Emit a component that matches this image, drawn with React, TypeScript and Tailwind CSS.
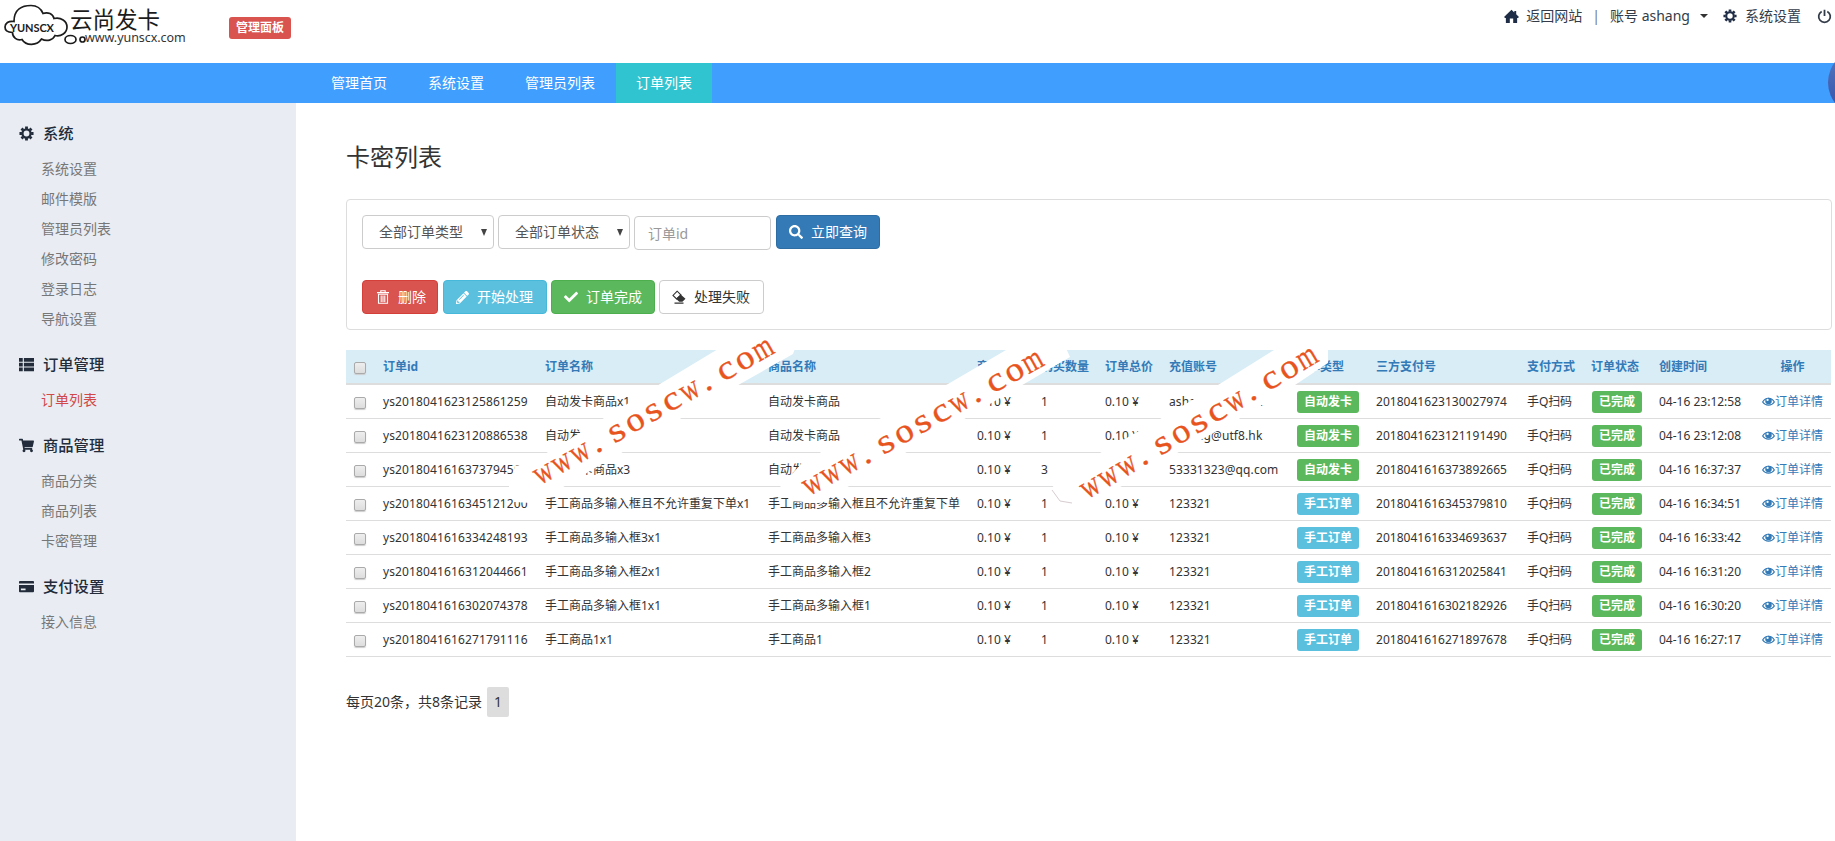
import { ReactNode } from 'react';
import { FaCheck, FaPencilAlt, FaSearch, FaShoppingCart } from 'react-icons/fa';

type IconProps = { className?: string };

const HomeIcon = ({ className }: IconProps) => (
  <svg className={className} viewBox="0 0 16 16" fill="currentColor">
    <path d="M8 0.8l3 2.8V2h2v3.500l3 3-1.200 1H14V15h-4.200v-4.800H6.200V15H2V9.500H1.200L0 8.500z" />
  </svg>
);

const GearIcon = ({ className }: IconProps) => (
  <svg className={className} viewBox="0 0 16 16" fill="none" stroke="currentColor">
    <circle cx="8" cy="8" r="4.3" strokeWidth="2.4" />
    <path
      strokeWidth="3"
      d="M8 0.5v2.600M8 12.900v2.600M0.500 8h2.600M12.900 8h2.600M2.700 2.700l1.800 1.800M11.500 11.500l1.800 1.800M2.700 13.300l1.800-1.800M11.500 4.500l1.800-1.800"
    />
  </svg>
);

const PowerIcon = ({ className }: IconProps) => (
  <svg className={className} viewBox="0 0 16 16" fill="none" stroke="currentColor" strokeWidth="1.9">
    <path d="M5 2.6a6.2 6.2 0 1 0 6 0M8 0.8v6.7" />
  </svg>
);

const ListIcon = ({ className }: IconProps) => (
  <svg className={className} viewBox="0 0 16 16" fill="currentColor">
    <path d="M0 1h4v4H0zM5.2 1H16v4H5.2zM0 6.1h4v4H0zM5.2 6.1H16v4H5.2zM0 11.2h4v4H0zM5.2 11.2H16v4H5.2z" />
  </svg>
);

const CardIcon = ({ className }: IconProps) => (
  <svg className={className} viewBox="0 0 16 16" fill="currentColor" fillRule="evenodd">
    <path d="M1 2h14a1 1 0 0 1 1 1v1.8H0V3a1 1 0 0 1 1-1zM0 6.5h16V13a1 1 0 0 1-1 1H1a1 1 0 0 1-1-1zM2 10v2h5v-2z" />
  </svg>
);

const TrashIcon = ({ className }: IconProps) => (
  <svg className={className} viewBox="0 0 14 14" fill="none" stroke="currentColor" strokeWidth="1.1">
    <path d="M1 2.6h12M4.8 2.4V0.8h4.400v1.600M2.500 4.300v9h9v-9zM5.200 5.500v6.500M7 5.500v6.500M8.800 5.500v6.500" />
  </svg>
);

const EraserIcon = ({ className }: IconProps) => (
  <svg className={className} viewBox="0 0 14 14">
    <path d="M5.200 1.200L1 5.400l3.600 3.600 4.400-4z" fill="none" stroke="currentColor" strokeWidth="1.1" />
    <path d="M8.600 4.400l4.900 4.300-3.100 3H7.200L4 8.800zM2.500 12.500h9v1.200h-9z" fill="currentColor" />
  </svg>
);

const EyeIcon = ({ className }: IconProps) => (
  <svg className={className} viewBox="0 0 14 12">
    <path d="M0.7 6C3.7 0.8 10.3 0.8 13.3 6 10.3 10.6 3.7 10.6 0.7 6z" fill="none" stroke="currentColor" strokeWidth="1.3" />
    <circle cx="7" cy="5" r="3.5" fill="currentColor" />
    <circle cx="6" cy="3.8" r="1.2" fill="#fff" />
  </svg>
);

const Logo = () => (
  <div className="flex w-[190px] pl-[4px]">
    <svg className="h-[48px] w-[83px] shrink-0" viewBox="4 0 83 48" fill="none" stroke="#1c1c1c" strokeWidth="1.7">
      <path d="M14 21.5C14 9 22 5.5 31 5.5 37 5.5 41 8.5 43 13.5 48 11.5 53 14 54 18.5 61 17 67 21 67 27 67 33 61 37 55 35.5 53 40 47 42 41.5 39 37 46 26 46 22 39.5 17 41 12.500 37.5 12.5 32.500 7 32.5 5 30 5 27 5 23.5 8.500 20.5 14 21.5z" />
      <ellipse cx="70.5" cy="39.5" rx="5.5" ry="4" />
      <circle cx="82.5" cy="39.5" r="2.5" />
      <text x="10" y="31.500" textLength="44" fontSize="11" fill="#1c1c1c" stroke="none" className="font-['Lato',sans-serif] font-bold">
        YUNSCX
      </text>
    </svg>
    <div className="-ml-[17px] pt-[7px] text-[#1c1c1c]">
      <div className="h-[24px] text-[22.5px] leading-[26px] whitespace-nowrap">云尚发卡</div>
      <div className="pl-[15px] text-[12.5px] leading-[14px] tracking-[-0.050px] text-[#333]">www.yunscx.com</div>
    </div>
  </div>
);

const menu: { title: string; icon: ReactNode; items: string[] }[] = [
  {
    title: '系统',
    icon: <GearIcon className="size-[15px]" />,
    items: ['系统设置', '邮件模版', '管理员列表', '修改密码', '登录日志', '导航设置'],
  },
  { title: '订单管理', icon: <ListIcon className="size-[15px]" />, items: ['订单列表'] },
  { title: '商品管理', icon: <FaShoppingCart className="size-[15px]" />, items: ['商品分类', '商品列表', '卡密管理'] },
  { title: '支付设置', icon: <CardIcon className="size-[15px]" />, items: ['接入信息'] },
];

const navItems = ['管理首页', '系统设置', '管理员列表', '订单列表'];

const columns = [
  { label: '订单id', width: 'w-[162px]' },
  { label: '订单名称', width: 'w-[223px]' },
  { label: '商品名称', width: 'w-[209px]' },
  { label: '商品单价', width: 'w-[64px]' },
  { label: '购买数量', width: 'w-[64px]' },
  { label: '订单总价', width: 'w-[64px]' },
  { label: '充值账号', width: 'w-[127px]' },
  { label: '订单类型', width: 'w-[80px]' },
  { label: '三方支付号', width: 'w-[151px]' },
  { label: '支付方式', width: 'w-[64px]' },
  { label: '订单状态', width: 'w-[68px]' },
  { label: '创建时间', width: 'w-[102px]' },
];

// id, order name, product, quantity, account, auto delivery, payment no., created
const orders: [string, string, string, number, string, boolean, string, string][] = [
  ['ys2018041623125861259', '自动发卡商品x1', '自动发卡商品', 1, 'ashang@utf8.hk', true, '2018041623130027974', '04-16 23:12:58'],
  ['ys2018041623120886538', '自动发卡商品x1', '自动发卡商品', 1, 'ashang@utf8.hk', true, '2018041623121191490', '04-16 23:12:08'],
  ['ys2018041616373794560', '自动发卡商品x3', '自动发卡商品', 3, '53331323@qq.com', true, '2018041616373892665', '04-16 16:37:37'],
  ['ys2018041616345121200', '手工商品多输入框且不允许重复下单x1', '手工商品多输入框且不允许重复下单', 1, '123321', false, '2018041616345379810', '04-16 16:34:51'],
  ['ys2018041616334248193', '手工商品多输入框3x1', '手工商品多输入框3', 1, '123321', false, '2018041616334693637', '04-16 16:33:42'],
  ['ys2018041616312044661', '手工商品多输入框2x1', '手工商品多输入框2', 1, '123321', false, '2018041616312025841', '04-16 16:31:20'],
  ['ys2018041616302074378', '手工商品多输入框1x1', '手工商品多输入框1', 1, '123321', false, '2018041616302182926', '04-16 16:30:20'],
  ['ys2018041616271791116', '手工商品1x1', '手工商品1', 1, '123321', false, '2018041616271897678', '04-16 16:27:17'],
];

const Checkbox = () => (
  <span
    role="checkbox"
    aria-checked="false"
    className="mt-[3px] ml-px block size-[12px] rounded-[2px] border border-[#aaa] bg-gradient-to-b from-[#eee] to-[#ddd] shadow-[0_1px_1px_#ccc]"
  />
);

const Label = ({ color, children }: { color: string; children: ReactNode }) => (
  <span className={`ml-px block h-[22px] w-fit rounded-[3px] px-[7px] text-[12px] leading-[22px] font-bold tracking-normal text-white ${color}`}>
    {children}
  </span>
);

const Select = ({ children }: { children: ReactNode }) => (
  <div className="flex h-[34px] w-[132px] items-center justify-between rounded border border-[#ccc] pr-[6px] pl-[16px] text-[#555]">
    {children}
    <svg className="h-[7px] w-[6px]" viewBox="0 0 6 7">
      <path d="M0 0h6L3 7z" fill="#444" />
    </svg>
  </div>
);

// Each mark is a white strip with thirteen evenly spaced letters set along a slope.
const marks = [
  {
    strip: '508,490 515,466 530,463 660,384 733,340 798,340 793,354 740,384 585,474 548,496 531,503 514,502',
    transform: 'translate(544 474) rotate(-29.4)',
  },
  {
    strip: '780,487 802,463 888,414 948,384 1018,343 1061,337 1070,357 1024,384 966,418 905,453 849,486 822,503 790,501',
    transform: 'translate(813 485) rotate(-29.1)',
  },
  {
    strip: '1052,488 1062,474 1100,453 1160,419 1218,385 1282,345 1328,338 1328,363 1295,385 1237,420 1177,453 1122,486 1090,503 1060,502',
    transform: 'translate(1091 488) rotate(-30.8)',
  },
];

const glyphScale: Record<string, number> = { w: 0.76, m: 0.74, s: 1.2, c: 1.15, o: 1.08, '.': 1.1 };

const Watermarks = () => (
  <svg className="pointer-events-none absolute top-0 left-0" width="1835" height="841" viewBox="0 0 1835 841">
    {marks.map((mark) => (
      <g key={mark.strip}>
        <polygon points={mark.strip} fill="#fff" />
        <g transform={mark.transform} fill="#e8541e" fontSize="34" textAnchor="middle" className="font-['Liberation_Serif',serif]">
          {'www.soscw.com'.split('').map((char, i) => (
            <text
              key={i}
              transform={`translate(${i * 21 - (char === '.' ? 3 : 0)} 8) scale(${glyphScale[char]} 1)`}
              stroke="#e8541e"
              strokeWidth="0.3"
            >
              {char}
            </text>
          ))}
        </g>
      </g>
    ))}
    <path d="M1052 490l8 11 12 2" fill="none" stroke="#d8ccd2" strokeWidth="1" />
  </svg>
);

export default function App() {
  return (
    <div className="relative flex h-[841px] w-[1835px] flex-col overflow-hidden bg-white font-['Noto_Sans','Noto_Sans_CJK_SC',sans-serif] text-[14px] leading-[20px] text-[#333]">
      <header className="flex h-[63px] shrink-0 justify-between">
        <div className="flex">
          <Logo />
          <span className="mt-[17px] ml-[39px] h-[22px] rounded-[3px] bg-[#d9534f] px-[7px] text-[12px] leading-[21px] font-bold text-white">
            管理面板
          </span>
        </div>
        <div className="flex h-[32px] items-center pr-[3px] text-[#333c48]">
          <HomeIcon className="mr-[7px] size-[15px] text-[#1f2d46]" />
          返回网站
          <span className="mx-[10px] text-[#777]">|</span>
          <span className="w-[81px] whitespace-nowrap">账号 ashang</span>
          <span className="mr-[15px] ml-[9px] border-x-4 border-t-4 border-x-transparent border-t-[#333]" />
          <GearIcon className="mr-[8px] size-[14px] text-[#1f2d46]" />
          系统设置
          <PowerIcon className="ml-[16px] size-[15px]" />
        </div>
      </header>

      <nav className="flex h-[40px] shrink-0 gap-px bg-[#409eff] pl-[311px] text-white">
        {navItems.map((item) => (
          <a key={item} className={`px-[20px] leading-[39px] ${item === '订单列表' ? 'bg-[#30c4d0]' : ''}`}>
            {item}
          </a>
        ))}
      </nav>
      <div className="absolute top-[49px] left-[1828px] size-[67px] rounded-full bg-gradient-to-b from-[#5878c0] to-[#3450a8]" />

      <div className="flex grow">
        <aside className="w-[296px] shrink-0 bg-[#e9ecf3] pt-[9px]">
          {menu.map((section) => (
            <section key={section.title} className="mb-[9px]">
              <h3 className="flex h-[42px] items-center gap-[9px] pl-[19px] text-[15.300px] font-medium text-[#222c3a]">
                {section.icon}
                {section.title}
              </h3>
              {section.items.map((item) => (
                <a key={item} className={`block pl-[41px] leading-[30px] ${item === '订单列表' ? 'text-[#d04848]' : 'text-[#777]'}`}>
                  {item}
                </a>
              ))}
            </section>
          ))}
        </aside>

        <main className="w-[1536px] pl-[50px]">
          <h1 className="mt-[37px] text-[24px] leading-[34px]">卡密列表</h1>

          <div className="mt-[25px] h-[131px] rounded border border-[#ddd] px-[15px] pt-[15px]">
            <div className="flex gap-[4px]">
              <Select>全部订单类型</Select>
              <Select>全部订单状态</Select>
              <input
                placeholder="订单id"
                className="mt-px mr-px h-[34px] w-[137px] rounded border border-[#ccc] px-[13px] placeholder:text-[#999]"
              />
              <button className="flex h-[34px] w-[104px] items-center gap-[8px] rounded border border-[#2e6da4] bg-[#337ab7] pl-[12px] text-white">
                <FaSearch className="size-[14px]" />
                立即查询
              </button>
            </div>
            <div className="mt-[30px] flex gap-[4px]">
              <button className="mr-px flex h-[34px] w-[76px] items-center gap-[8px] rounded border border-[#d43f3a] bg-[#d9534f] pl-[13px] text-white">
                <TrashIcon className="size-[14px]" />
                删除
              </button>
              <button className="flex h-[34px] w-[104px] items-center gap-[8px] rounded border border-[#46b8da] bg-[#5bc0de] pl-[12px] text-white">
                <FaPencilAlt className="size-[13px]" />
                开始处理
              </button>
              <button className="flex h-[34px] w-[104px] items-center gap-[8px] rounded border border-[#4cae4c] bg-[#5cb85c] pl-[12px] text-white">
                <FaCheck className="size-[14px]" />
                订单完成
              </button>
              <button className="flex h-[34px] w-[105px] items-center gap-[8px] rounded border border-[#ccc] bg-white pl-[12px]">
                <EraserIcon className="size-[14px]" />
                处理失败
              </button>
            </div>
          </div>

          <table className="mt-[20px] w-[1485px] table-fixed border-separate border-spacing-0 text-[12px] whitespace-nowrap">
            <thead>
              <tr className="h-[35px] bg-[#d9edf7] text-left text-[#337ab7]">
                <th className="w-[30px] border-b-2 border-[#ddd] pl-[7px]">
                  <Checkbox />
                </th>
                {columns.map((column) => (
                  <th key={column.label} className={`border-b-2 border-[#ddd] pl-[7px] font-bold ${column.width}`}>
                    {column.label}
                  </th>
                ))}
                <th className="w-[77px] border-b-2 border-[#ddd] text-center font-bold">操作</th>
              </tr>
            </thead>
            <tbody>
              {orders.map(([id, name, product, count, account, auto, payNo, created]) => (
                <tr key={id} className="h-[34px] *:border-b *:border-[#ddd] *:pl-[7px]">
                  <td>
                    <Checkbox />
                  </td>
                  <td className="tracking-[0.120px]">{id}</td>
                  <td>{name}</td>
                  <td>{product}</td>
                  <td>0.10 ¥</td>
                  <td>{count}</td>
                  <td>0.10 ¥</td>
                  <td className="tracking-[0.100px]">{account}</td>
                  <td>
                    <Label color={auto ? 'bg-[#5cb85c]' : 'bg-[#5bc0de]'}>{auto ? '自动发卡' : '手工订单'}</Label>
                  </td>
                  <td className="tracking-[0.030px]">{payNo}</td>
                  <td className="tracking-[-0.100px]">手Q扫码</td>
                  <td>
                    <Label color="bg-[#5cb85c]">已完成</Label>
                  </td>
                  <td>{created}</td>
                  <td className="text-[#337ab7]">
                    <a className="flex items-center pl-px">
                      <EyeIcon className="h-[12px] w-[13px]" />
                      订单详情
                    </a>
                  </td>
                </tr>
              ))}
            </tbody>
          </table>

          <div className="mt-[30px] flex h-[30px] items-center gap-[5px]">
            <span>每页20条，共8条记录</span>
            <span className="h-[30px] w-[22px] rounded-[2px] bg-[#ddd] text-center leading-[30px]">1</span>
          </div>
        </main>
      </div>

      <Watermarks />
    </div>
  );
}
